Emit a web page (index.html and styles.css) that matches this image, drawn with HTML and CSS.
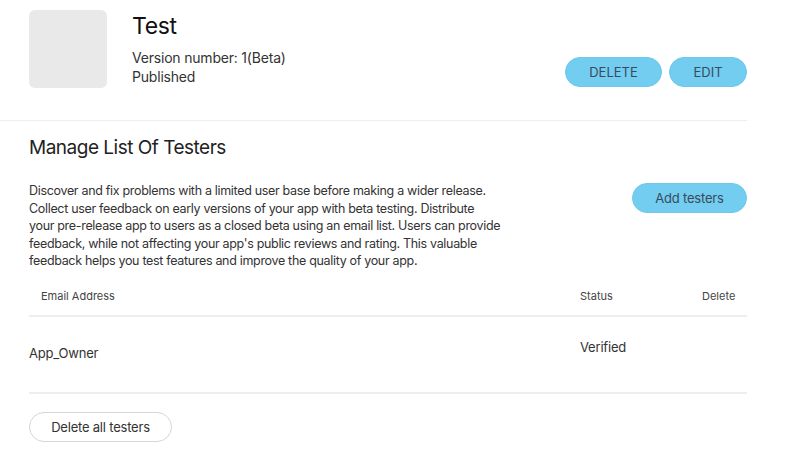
FILE: index.html
```html
<!DOCTYPE html>
<html lang="en">
<head>
    <meta charset="UTF-8">
    <meta name="viewport" content="width=device-width, initial-scale=1.0">
    <title>Test - Beta Testing</title>
    <link rel="stylesheet" href="styles.css">
</head>
<body>
    <header class="app-header">
        <div class="app-thumb"></div>
        <div class="app-info">
            <h1>Test</h1>
            <p>Version number: 1(Beta)</p>
            <p>Published</p>
        </div>
        <div class="app-actions">
            <button class="btn btn-blue btn-caps">DELETE</button>
            <button class="btn btn-blue btn-caps btn-edit">EDIT</button>
        </div>
    </header>

    <section class="testers">
        <h2>Manage List Of Testers</h2>
        <div class="intro">
            <p>Discover and fix problems with a limited user base before making a wider release.<br>
            Collect user feedback on early versions of your app with beta testing. Distribute<br>
            your pre-release app to users as a closed beta using an email list. Users can provide<br>
            feedback, while not affecting your app's public reviews and rating. This valuable<br>
            feedback helps you test features and improve the quality of your app.</p>
            <button class="btn btn-blue btn-add">Add testers</button>
        </div>

        <div class="table">
            <div class="row head">
                <div class="col-email">Email Address</div>
                <div class="col-status">Status</div>
                <div class="col-delete">Delete</div>
            </div>
            <div class="row item">
                <div class="col-email">App_Owner</div>
                <div class="col-status">Verified</div>
                <div class="col-delete"></div>
            </div>
        </div>

        <button class="btn btn-outline">Delete all testers</button>
    </section>
</body>
</html>
```

FILE: styles.css
```css
body {
    font-family: Inter, "Noto Sans", sans-serif;
    margin: 0;
    background-color: #fff;
    color: #333;
}
.app-header {
    display: flex;
    width: 718px;
    padding: 10px 0 32px 29px;
    border-bottom: 1px solid #eeeeee;
}
.app-thumb {
    width: 78px;
    height: 78px;
    border-radius: 6px;
    background-color: #e9e9e9;
}
.app-info {
    margin-left: 25px;
}
.app-info h1 {
    margin: 2px 0 8px;
    font-size: 23px;
    font-weight: 400;
    letter-spacing: -0.4px;
    color: #111;
    line-height: 28px;
}
.app-info p {
    margin: 0;
    font-size: 14px;
    line-height: 19px;
    letter-spacing: -0.2px;
    color: #333;
}
.app-actions {
    margin-left: auto;
    padding-top: 47px;
    display: flex;
    gap: 7px;
}
.btn {
    height: 30px;
    border-radius: 15px;
    font-family: inherit;
    font-size: 13px;
    cursor: pointer;
}
.btn-blue {
    background-color: #72cdf0;
    border: 1px solid #6cc8ec;
    color: #3a4b5c;
}
.btn-caps {
    width: 97px;
}
.btn-edit {
    width: 78px;
}
.btn-add {
    width: 115px;
    margin-top: 1px;
    letter-spacing: -0.2px;
}
.testers {
    width: 718px;
    padding: 0 0 0 29px;
}
.testers h2 {
    margin: 14px 0 0;
    font-size: 19px;
    font-weight: 400;
    letter-spacing: -0.5px;
    color: #222;
    line-height: 26px;
}
.intro {
    display: flex;
    justify-content: space-between;
    align-items: flex-start;
    margin-top: 21px;
}
.intro p {
    margin: 0;
    font-size: 12.5px;
    line-height: 17.5px;
    letter-spacing: -0.32px;
    color: #333;
}
.table {
    margin-top: 12px;
}
.row {
    display: grid;
    grid-template-columns: 1fr 122px 45px;
    border-bottom: 2px solid #eeeeee;
}
.head {
    height: 33px;
    align-items: start;
    padding-top: 0;
    font-size: 11px;
    line-height: 28px;
    color: #444;
}
.head .col-email {
    padding-left: 12px;
}
.item {
    height: 75px;
    font-size: 13px;
    letter-spacing: -0.2px;
    color: #333;
}
.item .col-email {
    padding-top: 28px;
}
.item .col-status {
    padding-top: 22px;
}
.btn-outline {
    margin-top: 18px;
    width: 143px;
    background-color: #fff;
    border: 1px solid #d6d6d6;
    color: #333;
    letter-spacing: -0.2px;
}
```
